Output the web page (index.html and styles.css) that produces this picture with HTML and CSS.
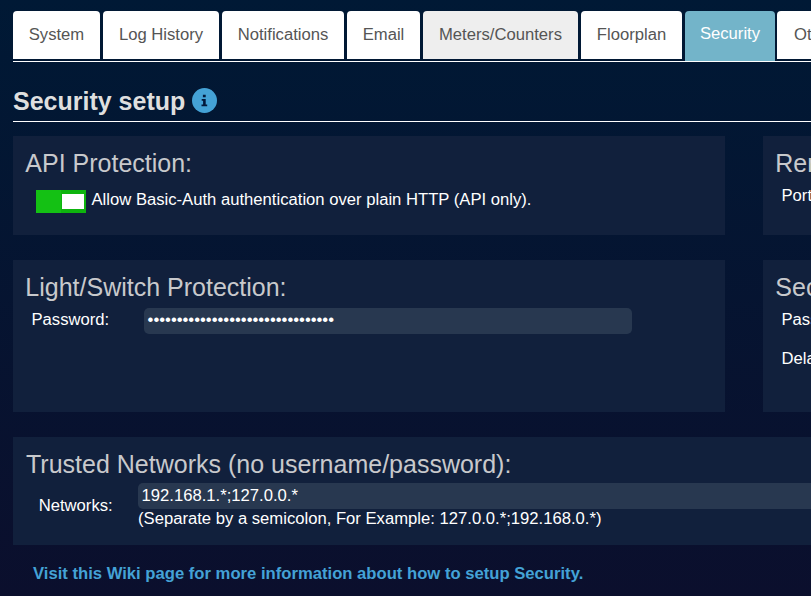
FILE: index.html
```html
<!DOCTYPE html>
<html lang="en">
<head>
<meta charset="utf-8">
<title>Security setup</title>
<link rel="stylesheet" href="styles.css">
</head>
<body>
<nav class="tabs">
  <a class="tab">System</a>
  <a class="tab">Log History</a>
  <a class="tab">Notifications</a>
  <a class="tab">Email</a>
  <a class="tab hover">Meters/Counters</a>
  <a class="tab">Floorplan</a>
  <a class="tab active">Security</a>
  <a class="tab last">Other</a>
</nav>
<header class="page-title">
  <h1>Security setup</h1>
  <svg class="info" viewBox="0 0 25 25" width="25" height="25">
    <circle cx="12.5" cy="12.5" r="12.5" fill="#44a2d6"/>
    <path d="M10.9 6.8h2.8v2.5h-2.8zM9.7 11h4v5.4h1.5v1.8H9.5v-1.8h1.6v-3.6H9.7z" fill="#02183a"/>
  </svg>
</header>
<main class="panels">
  <section class="panel">
    <h2>API Protection:</h2>
    <div class="switch-row"><span class="switch"><span class="knob"></span></span><span>Allow Basic-Auth authentication over plain HTTP (API only).</span></div>
  </section>
  <section class="panel">
    <h2>Remote Proxy:</h2>
    <div class="label side">Port:</div>
  </section>
  <section class="panel">
    <h2>Light/Switch Protection:</h2>
    <div class="password-row"><span class="label">Password:</span><span class="field secret">••••••••••••••••••••••••••••••••</span></div>
  </section>
  <section class="panel">
    <h2>Security Panel:</h2>
    <div class="label side">Password:</div>
    <div class="label side delay">Delay:</div>
  </section>
  <section class="panel wide">
    <h2 class="networks-title">Trusted Networks (no username/password):</h2>
    <div class="network-row">
      <span class="network-label">Networks:</span>
      <div class="network-value">
        <div class="field">192.168.1.*;127.0.0.*</div>
        <div class="hint">(Separate by a semicolon, For Example: 127.0.0.*;192.168.0.*)</div>
      </div>
    </div>
  </section>
</main>
<a class="wiki">Visit this Wiki page for more information about how to setup Security.</a>
</body>
</html>
```
FILE: styles.css
```css
* { box-sizing: border-box; }
html { height: 100%; overflow: hidden; }
body {
  height: 596px;
  margin: 0;
  padding: 11px 0 0 13px;
  overflow: hidden;
  background: linear-gradient(#001935, #0b0f2d);
  color: #fff;
  font: 16.65px/20px "Liberation Sans", Arial, sans-serif;
  white-space: nowrap;
}
.tabs {
  display: grid;
  grid-template-columns: 87px 116px 122px 73px 155px 101px 90px 80px;
  column-gap: 3px;
  height: 51px;
  width: 900px;
  border-bottom: 1px solid #fff;
}
.tab {
  height: 48px;
  padding-top: 14px;
  border-radius: 4px 4px 0 0;
  background: #fff;
  color: #555;
  text-align: center;
}
.tab.hover { background: #eee; }
.tab.active { height: 50px; padding-top: 13px; background: #73b4c9; color: #fff; }
.tab.last { margin-left: -1px; padding-left: 17px; text-align: left; }
.page-title {
  display: flex;
  align-items: center;
  gap: 7px;
  height: 60px;
  padding-top: 19px;
  border-bottom: 1px solid #fff;
}
h1 { margin: 0; color: #dfdfdf; font-size: 25px; line-height: 30px; }
.info { margin-top: -1px; }
.panels {
  display: grid;
  grid-template-columns: 712px 712px;
  grid-template-rows: 99px 152px 108px;
  gap: 25px 38px;
  margin-top: 14px;
}
.panel { padding: 12px; background: #11203c; }
.wide { grid-column: span 2; }
h2 { margin: 0; padding-left: .3px; color: #c8c9cc; font-size: 25px; font-weight: 400; line-height: 30px; }
.switch-row { display: flex; gap: 5.5px; padding: 12px 0 0 11px; line-height: 19px; }
.switch { width: 50px; height: 23px; padding: 4px 2px 4px 26px; background: #14c114; box-shadow: inset -25px 0 #0eb40e; }
.knob { display: block; height: 15px; background: #fff; }
.label { padding-left: 6.5px; line-height: 36px; }
.side { line-height: 35px; }
.delay { margin-top: 4px; }
.password-row { display: flex; }
.password-row .label { width: 119px; }
.field { display: block; height: 26px; padding-left: 3.6px; border-radius: 5px; background: #283850; line-height: 26px; }
.secret { width: 488px; margin-top: 6px; line-height: 24px; }
.networks-title { padding-left: 1px; }
.network-row { display: flex; padding-top: 4px; }
.network-label { width: 113px; padding: 13px 0 0 13.7px; }
.network-value { width: 1200px; }
.hint { line-height: 20px; }
.wiki { display: block; margin: 19px 0 0 20px; color: #44a2d6; font-weight: 700; }
```
